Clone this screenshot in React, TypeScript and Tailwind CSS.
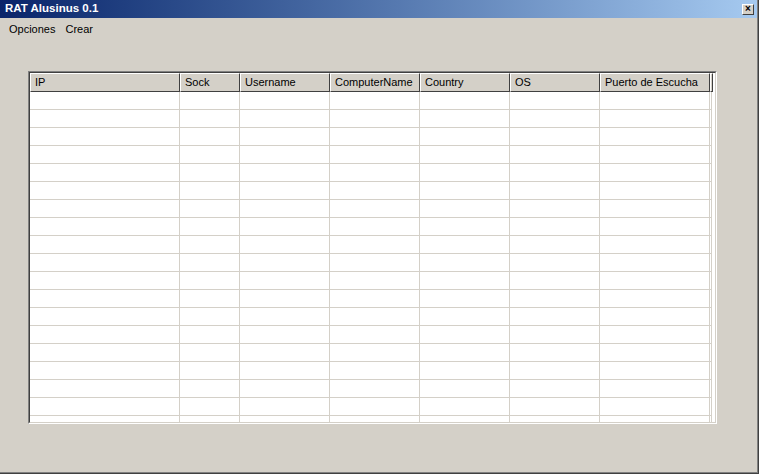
const columns = [
  { name: 'IP', width: 'w-[150px]' },
  { name: 'Sock', width: 'w-[60px]' },
  { name: 'Username', width: 'w-[90px]' },
  { name: 'ComputerName', width: 'w-[90px]' },
  { name: 'Country', width: 'w-[90px]' },
  { name: 'OS', width: 'w-[90px]' },
  { name: 'Puerto de Escucha', width: 'w-[110px]' },
]

const rows = Array.from({ length: 19 }, (_, i) => i)

export default function App() {
  return (
    <div
      className="w-[759px] h-[474px] bg-[#d4d0c8] text-black overflow-hidden"
      style={{ fontFamily: '"Liberation Sans", Arial, sans-serif' }}
    >
      <div className="h-full border-r border-b border-[#404040]">
        <div className="h-full flex flex-col border-r border-b border-[#808080]">
          {/* title bar */}
          <div className="h-[18px] flex items-center justify-between bg-gradient-to-r from-[#0a246a] to-[#a6caf0] pl-[5px] pr-[3px]">
            <span className="text-white font-bold text-[11.5px] leading-none">RAT Alusinus 0.1</span>
            <button className="w-[12px] h-[11px] flex items-center justify-center bg-[#d4d0c8] border-t border-l border-white border-r border-b border-r-[#404040] border-b-[#404040] text-[10px] leading-none font-bold">
              ×
            </button>
          </div>

          {/* menu */}
          <div className="h-[22px] flex items-center pl-[9px] gap-[10px] text-[11px]">
            <span>Opciones</span>
            <span>Crear</span>
          </div>

          {/* content */}
          <div className="flex-1 pt-[31px] pl-[28px]">
            <div className="w-[689px] h-[353px] border-t border-l border-[#808080] border-r border-b border-r-white border-b-white">
              <div className="h-full flex flex-col border-t border-l border-[#404040] border-r border-b border-r-[#d4d0c8] border-b-[#d4d0c8] bg-white overflow-hidden">
                {/* header */}
                <div className="h-[19px] flex shrink-0 bg-[#d4d0c8] text-[11px]">
                  {columns.map((c) => (
                    <div
                      key={c.name}
                      className={`${c.width} shrink-0 flex items-center pl-[4px] border-t border-l border-white border-r border-b border-r-[#404040] border-b-[#404040]`}
                    >
                      <span className="leading-none">{c.name}</span>
                    </div>
                  ))}
                  <div className="w-[3px] shrink-0 border-t border-l border-white border-r border-b border-r-[#404040] border-b-[#404040]" />
                  <div className="flex-1 bg-white" />
                </div>

                {/* rows */}
                <div className="flex-1 overflow-hidden">
                  {rows.map((r) => (
                    <div key={r} className="h-[18px] flex">
                      {columns.map((c) => (
                        <div
                          key={c.name}
                          className={`${c.width} shrink-0 border-r border-b border-[#d4d0c8]`}
                        />
                      ))}
                      <div className="w-[1px] shrink-0 border-b border-[#d4d0c8]" />
                      <div className="w-[1px] shrink-0 border-r border-b border-[#d4d0c8]" />
                    </div>
                  ))}
                </div>
              </div>
            </div>
          </div>
        </div>
      </div>
    </div>
  )
}
